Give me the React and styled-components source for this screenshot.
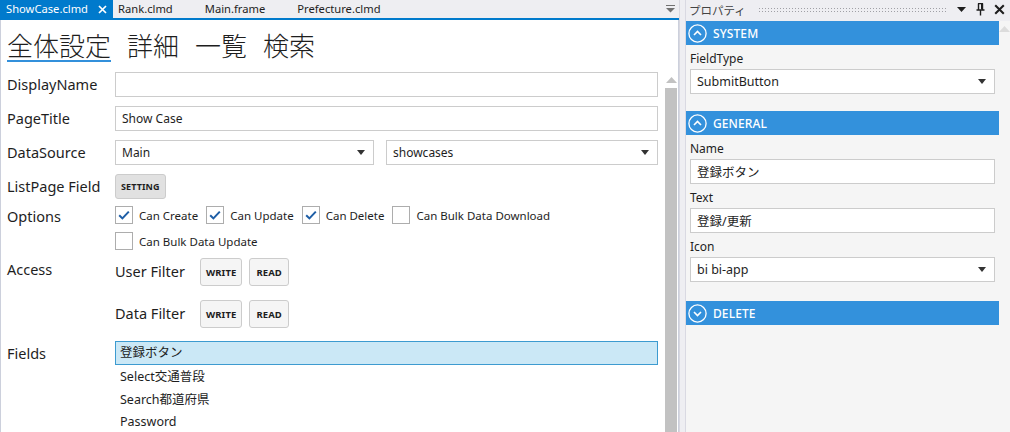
import React from "react";
import styled, { createGlobalStyle } from "styled-components";

const GlobalStyle = createGlobalStyle`
  html, body {
    margin: 0;
    padding: 0;
    background: #eeeef2;
  }
  body {
    font-family: "Noto Sans", "Noto Sans CJK JP", sans-serif;
    color: #1e1e1e;
  }
  * { box-sizing: border-box; }
`;

const Window = styled.div`
  display: flex;
  width: 1010px;
  height: 432px;
  overflow: hidden;
  background: #eeeef2;
`;

/* ---------- document side ---------- */

const DocPanel = styled.div`
  width: 679px;
  display: flex;
  flex-direction: column;
`;

const TabStrip = styled.div`
  height: 18px;
  display: flex;
  align-items: stretch;
  font-size: 11.2px;
`;

const DocTab = styled.div`
  display: flex;
  align-items: center;
  padding: ${(p) => (p.$active ? "0 6px 0 6px" : "0 27px 0 5px")};
  background: ${(p) => (p.$active ? "#007acc" : "transparent")};
  color: ${(p) => (p.$active ? "#ffffff" : "#1e1e1e")};
  white-space: nowrap;
  line-height: 18px;
  & svg {
    margin-left: 10px;
  }
`;

const TabMenu = styled.div`
  margin-left: auto;
  width: 14px;
  display: flex;
  align-items: center;
  justify-content: center;
  margin-right: 2px;
`;

const TabLine = styled.div`
  height: 2px;
  background: #007acc;
`;

const DocBody = styled.div`
  flex: 1;
  min-height: 0;
  background: #ffffff;
  border-left: 1px solid #ccd0dc;
  border-right: 1px solid #ccd0dc;
  display: flex;
  flex-direction: column;
`;

const PageTabs = styled.div`
  display: flex;
  gap: 16px;
  padding: 10px 0 0 6px;
  margin-bottom: 10px;
`;

const PageTab = styled.div`
  font-size: 26px;
  line-height: 30px;
  height: 32px;
  font-family: "Noto Sans CJK JP", sans-serif;
  font-weight: 300;
  color: #1e1e1e;
  border-bottom: 2px solid ${(p) => (p.$active ? "#3390db" : "transparent")};
`;

const ScrollRow = styled.div`
  flex: 1;
  min-height: 0;
  display: flex;
`;

const Form = styled.div`
  flex: 1;
  overflow: hidden;
  padding: 0 7px 0 6px;
`;

const Row = styled.div`
  display: flex;
  align-items: flex-start;
  margin-bottom: ${(p) => p.$gap ?? 9}px;
`;

const Label = styled.div`
  width: 108px;
  flex: none;
  font-size: 14.5px;
  line-height: ${(p) => p.$lh ?? 24}px;
  color: #1e1e1e;
  white-space: nowrap;
`;

const Field = styled.div`
  flex: 1;
  min-width: 0;
  display: flex;
  gap: 12px;
`;

const TextBox = styled.div`
  flex: ${(p) => p.$flex ?? 1};
  height: 25px;
  border: 1px solid #cccccc;
  background: #ffffff;
  display: flex;
  align-items: center;
  padding: 0 8px 0 6px;
  font-size: 12px;
  color: #1e1e1e;
  white-space: nowrap;
  & span {
    flex: 1;
  }
`;

const SmallButton = styled.button`
  height: ${(p) => p.$h ?? 25}px;
  padding: 0 ${(p) => p.$px ?? 5}px;
  border: 1px solid #cccccc;
  border-radius: 3px;
  background: ${(p) => (p.$pressed ? "#e1e1e1" : "#f5f5f5")};
  font-family: "Noto Sans", sans-serif;
  font-size: ${(p) => p.$fs ?? 9}px;
  font-weight: 700;
  color: #1e1e1e;
  letter-spacing: 0.1px;
`;

const Options = styled.div`
  flex: 1;
  display: flex;
  flex-direction: column;
  gap: 8px;
  padding-top: 7px;
`;

const OptionLine = styled.div`
  display: flex;
  gap: 8px;
`;

const Option = styled.label`
  display: flex;
  align-items: center;
  gap: 6px;
  font-size: 11.5px;
  color: #1e1e1e;
  white-space: nowrap;
`;

const Box = styled.span`
  width: 18px;
  height: 18px;
  border: 1px solid #adadad;
  background: #ffffff;
  display: flex;
  align-items: center;
  justify-content: center;
`;

const AccessBlock = styled.div`
  display: flex;
  flex-direction: column;
  gap: 14px;
`;

const AccessLine = styled.div`
  height: 28px;
  display: flex;
  align-items: center;
  gap: 7px;
`;

const AccessName = styled.div`
  width: 78px;
  font-size: 14.5px;
  line-height: 24px;
  margin-top: -3px;
  white-space: nowrap;
`;

const List = styled.div`
  flex: 1;
  display: flex;
  flex-direction: column;
`;

const ListItem = styled.div`
  height: ${(p) => (p.$selected ? 24 : 22.5)}px;
  line-height: 22px;
  padding-left: 4px;
  font-size: 12.5px;
  background: ${(p) => (p.$selected ? "#cbe8f6" : "transparent")};
  border: 1px solid ${(p) => (p.$selected ? "#3d9bd0" : "transparent")};
  white-space: nowrap;
`;

const VScroll = styled.div`
  width: 12px;
  margin-right: 1px;
  display: flex;
  flex-direction: column;
  align-items: stretch;
`;

const ScrollArrow = styled.div`
  height: 16px;
  display: flex;
  align-items: center;
  justify-content: center;
`;

const Thumb = styled.div`
  flex: 1;
  background: #c2c2c2;
`;

/* ---------- property side ---------- */

const Splitter = styled.div`
  width: 7px;
  border-left: 1px solid #d8d8e0;
  flex: none;
`;

const PropPanel = styled.div`
  flex: 1;
  display: flex;
  flex-direction: column;
  border-left: 1px solid #d9d9e2;
  margin-left: -1px;
`;

const PropTitle = styled.div`
  height: 21px;
  display: flex;
  align-items: center;
  padding: 0 4px 2px 3px;
  gap: 6px;
  font-size: 11.5px;
  color: #444444;
  font-family: "Noto Sans CJK JP", sans-serif;
`;

const Grip = styled.div`
  flex: 1;
  height: 5px;
  margin: 0 2px 0 6px;
  background-image: radial-gradient(circle, #a0a0a6 0.7px, transparent 0.9px);
  background-size: 3px 3px;
`;

const TitleIcon = styled.span`
  width: 13px;
  display: flex;
  align-items: center;
  justify-content: center;
`;

const PropBody = styled.div`
  flex: 1;
  min-height: 0;
  display: flex;
  background: #f5f5f5;
`;

const PropContent = styled.div`
  flex: 1;
  min-width: 0;
`;

const Section = styled.div`
  margin-bottom: ${(p) => p.$gap ?? 17}px;
`;

const SectionHead = styled.div`
  height: 24px;
  background: #3391dc;
  display: flex;
  align-items: center;
  padding-left: 2px;
  gap: 6px;
  color: #ffffff;
  font-size: 12px;
  font-weight: 500;
  letter-spacing: 0.1px;
`;

const SectionBody = styled.div`
  padding: 0 4px 0 4px;
`;

const PropLabel = styled.div`
  margin-top: 5px;
  font-size: 12px;
  line-height: 17px;
  color: #1e1e1e;
`;

const PropBox = styled.div`
  margin-top: 2px;
  height: 25px;
  border: 1px solid #cccccc;
  background: #ffffff;
  display: flex;
  align-items: center;
  padding: 0 8px 0 6px;
  font-size: 12.5px;
  white-space: nowrap;
  & span {
    flex: 1;
  }
`;

const PropScroll = styled.div`
  width: 11px;
  display: flex;
  flex-direction: column;
`;

/* ---------- drawings ---------- */

const DropArrow = () => (
  <svg width="8" height="5" viewBox="0 0 8 5">
    <path d="M0 0h8L4 5z" fill="#333333" />
  </svg>
);

const CloseGlyph = ({ color = "#ffffff", size = 9 }) => (
  <svg width={size} height={size} viewBox="0 0 9 9">
    <path d="M1 1l7 7M8 1L1 8" stroke={color} strokeWidth="1.7" />
  </svg>
);

const Check = () => (
  <svg width="12" height="10" viewBox="0 0 12 10">
    <path d="M1.2 5.2l3.2 3.2L10.8 1.6" fill="none" stroke="#1e5ea6" strokeWidth="2" />
  </svg>
);

const CircleChevron = ({ up }) => (
  <svg width="19" height="19" viewBox="0 0 19 19">
    <circle cx="9.5" cy="9.5" r="8.6" fill="none" stroke="#ffffff" strokeWidth="1.3" />
    <path
      d={up ? "M6 11l3.5-3.5L13 11" : "M6 8l3.5 3.5L13 8"}
      fill="none"
      stroke="#ffffff"
      strokeWidth="1.6"
    />
  </svg>
);

const CheckOption = ({ checked, children }) => (
  <Option>
    <Box>{checked && <Check />}</Box>
    {children}
  </Option>
);

export default function App() {
  return (
    <>
      <GlobalStyle />
      <Window>
        <DocPanel>
          <TabStrip>
            <DocTab $active>
              ShowCase.clmd
              <CloseGlyph />
            </DocTab>
            <DocTab>Rank.clmd</DocTab>
            <DocTab>Main.frame</DocTab>
            <DocTab>Prefecture.clmd</DocTab>
            <TabMenu>
              <svg width="9" height="8" viewBox="0 0 9 8">
                <path d="M0 0.5h9" stroke="#717171" strokeWidth="1" />
                <path d="M0 3h9L4.5 7.5z" fill="#717171" />
              </svg>
            </TabMenu>
          </TabStrip>
          <TabLine />
          <DocBody>
            <PageTabs>
              <PageTab $active>全体設定</PageTab>
              <PageTab>詳細</PageTab>
              <PageTab>一覧</PageTab>
              <PageTab>検索</PageTab>
            </PageTabs>
            <ScrollRow>
              <Form>
                <Row>
                  <Label>DisplayName</Label>
                  <Field>
                    <TextBox />
                  </Field>
                </Row>
                <Row>
                  <Label>PageTitle</Label>
                  <Field>
                    <TextBox>Show Case</TextBox>
                  </Field>
                </Row>
                <Row>
                  <Label>DataSource</Label>
                  <Field>
                    <TextBox $flex="0 0 259px">
                      <span>Main</span>
                      <DropArrow />
                    </TextBox>
                    <TextBox>
                      <span>showcases</span>
                      <DropArrow />
                    </TextBox>
                  </Field>
                </Row>
                <Row $gap={0}>
                  <Label>ListPage Field</Label>
                  <SmallButton $pressed>SETTING</SmallButton>
                </Row>
                <Row $gap={8}>
                  <Label $lh={34}>Options</Label>
                  <Options>
                    <OptionLine>
                      <CheckOption checked>Can Create</CheckOption>
                      <CheckOption checked>Can Update</CheckOption>
                      <CheckOption checked>Can Delete</CheckOption>
                      <CheckOption>Can Bulk Data Download</CheckOption>
                    </OptionLine>
                    <OptionLine>
                      <CheckOption>Can Bulk Data Update</CheckOption>
                    </OptionLine>
                  </Options>
                </Row>
                <Row $gap={13}>
                  <Label $lh={22}>Access</Label>
                  <AccessBlock>
                    <AccessLine>
                      <AccessName>User Filter</AccessName>
                      <SmallButton $h={28} $px={5} $fs={9.5}>WRITE</SmallButton>
                      <SmallButton $h={28} $px={6} $fs={9.5}>READ</SmallButton>
                    </AccessLine>
                    <AccessLine>
                      <AccessName>Data Filter</AccessName>
                      <SmallButton $h={28} $px={5} $fs={9.5}>WRITE</SmallButton>
                      <SmallButton $h={28} $px={6} $fs={9.5}>READ</SmallButton>
                    </AccessLine>
                  </AccessBlock>
                </Row>
                <Row>
                  <Label>Fields</Label>
                  <List>
                    <ListItem $selected>登録ボタン</ListItem>
                    <ListItem>Select交通普段</ListItem>
                    <ListItem>Search都道府県</ListItem>
                    <ListItem>Password</ListItem>
                  </List>
                </Row>
              </Form>
              <VScroll>
                <ScrollArrow>
                  <svg width="11" height="6" viewBox="0 0 11 6">
                    <path d="M0 6L5.5 0L11 6z" fill="#c2c2c2" />
                  </svg>
                </ScrollArrow>
                <Thumb />
              </VScroll>
            </ScrollRow>
          </DocBody>
        </DocPanel>
        <Splitter />
        <PropPanel>
          <PropTitle>
            プロパティ
            <Grip />
            <TitleIcon>
              <svg width="9" height="5" viewBox="0 0 9 5">
                <path d="M0 0h9L4.5 5z" fill="#1e1e1e" />
              </svg>
            </TitleIcon>
            <TitleIcon>
              <svg width="9" height="13" viewBox="0 0 9 13">
                <path
                  d="M2 0.5h5M2.5 0.5v6M6.5 0.5v6M0.5 7h8M4.5 7v5.5"
                  fill="none"
                  stroke="#1e1e1e"
                  strokeWidth="1.4"
                />
                <path d="M5 1h1.5v5.5H5z" fill="#1e1e1e" />
              </svg>
            </TitleIcon>
            <TitleIcon>
              <CloseGlyph color="#1e1e1e" size={11} />
            </TitleIcon>
          </PropTitle>
          <PropBody>
            <PropContent>
              <Section>
                <SectionHead>
                  <CircleChevron up />
                  SYSTEM
                </SectionHead>
                <SectionBody>
                  <PropLabel>FieldType</PropLabel>
                  <PropBox>
                    <span>SubmitButton</span>
                    <DropArrow />
                  </PropBox>
                </SectionBody>
              </Section>
              <Section $gap={19}>
                <SectionHead>
                  <CircleChevron up />
                  GENERAL
                </SectionHead>
                <SectionBody>
                  <PropLabel>Name</PropLabel>
                  <PropBox>登録ボタン</PropBox>
                  <PropLabel>Text</PropLabel>
                  <PropBox>登録/更新</PropBox>
                  <PropLabel>Icon</PropLabel>
                  <PropBox>
                    <span>bi bi-app</span>
                    <DropArrow />
                  </PropBox>
                </SectionBody>
              </Section>
              <Section>
                <SectionHead>
                  <CircleChevron />
                  DELETE
                </SectionHead>
              </Section>
            </PropContent>
            <PropScroll>
              <ScrollArrow>
                <svg width="11" height="6" viewBox="0 0 11 6">
                  <path d="M0 6L5.5 0L11 6z" fill="#dcdcdc" />
                </svg>
              </ScrollArrow>
            </PropScroll>
          </PropBody>
        </PropPanel>
      </Window>
    </>
  );
}
